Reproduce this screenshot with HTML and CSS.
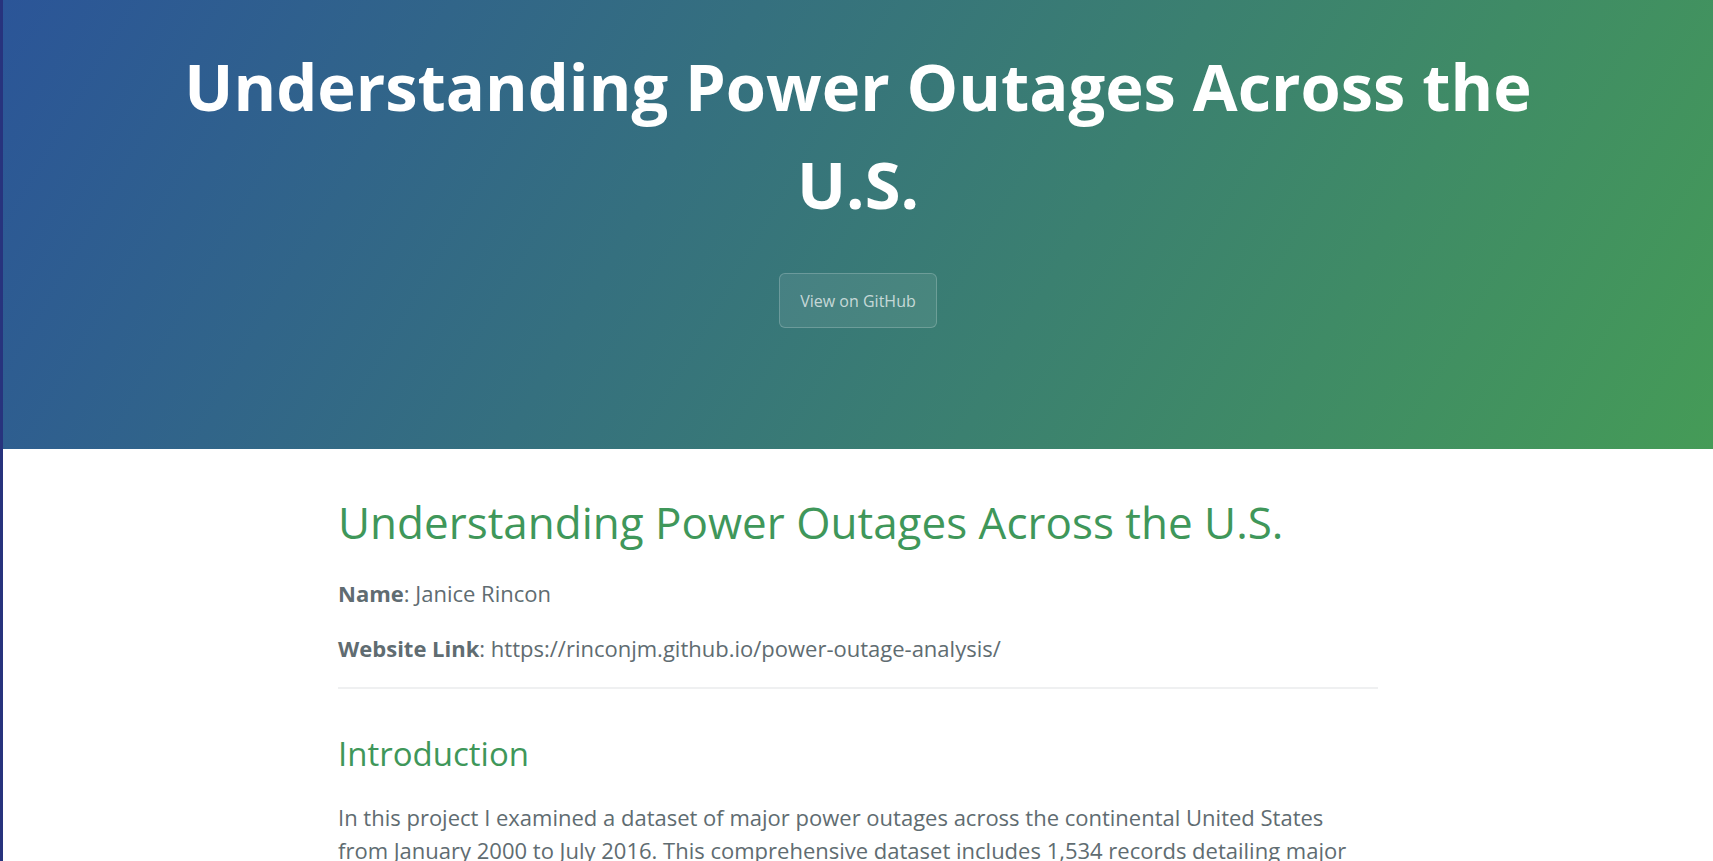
FILE: index.html
```html
<!DOCTYPE html>
<html lang="en">
<head>
<meta charset="utf-8">
<title>Understanding Power Outages Across the U.S.</title>
<link rel="stylesheet" href="styles.css">
</head>
<body>
<header class="page-header">
  <h1 class="project-name">Understanding Power Outages Across the U.S.</h1>
  <a class="btn" href="#">View on GitHub</a>
</header>
<main class="main-content">
  <h1 class="title">Understanding Power Outages Across the U.S.</h1>
  <p><strong>Name</strong>: Janice Rincon</p>
  <p><strong>Website Link</strong>: https://rinconjm.github.io/power-outage-analysis/</p>
  <hr class="rule">
  <h2 class="section-title">Introduction</h2>
  <p>In this project I examined a dataset of major power outages across the continental United States from January 2000 to July 2016. This comprehensive dataset includes 1,534 records detailing major power outage events, including information on their geographic location, climatic conditions, causes, and the number of customers affected.</p>
</main>
</body>
</html>
```

FILE: styles.css
```css
* {
  box-sizing: border-box;
}

html, body {
  margin: 0;
  padding: 0;
}

body {
  font-family: "Open Sans", "Liberation Sans", sans-serif;
  font-size: 20px;
  line-height: 1.5;
  color: #606c71;
  background: #ffffff;
  border-left: 3px solid #27337d;
  min-height: 100vh;
}

.page-header {
  color: #ffffff;
  text-align: center;
  background-color: #3f8a6a;
  background-image: linear-gradient(120deg, #2b5598, #459b57);
  padding: 38px 130px 101px;
}

.project-name {
  font-size: 65px;
  font-weight: 700;
  line-height: 1.5;
  margin: 0 0 40px;
}

.btn {
  display: inline-block;
  font-size: 16px;
  line-height: 1.5;
  padding: 14.5px 20px;
  margin-bottom: 20px;
  color: rgba(255, 255, 255, 0.7);
  background-color: rgba(255, 255, 255, 0.08);
  border: 1px solid rgba(255, 255, 255, 0.2);
  border-radius: 6px;
  text-decoration: none;
}

.main-content {
  max-width: 1280px;
  margin: 0 auto;
  padding: 40px 120px;
  font-size: 22px;
  line-height: 1.5;
  word-wrap: break-word;
}

.main-content p {
  margin: 22px 0;
}

.main-content strong {
  font-weight: 700;
}

.title {
  font-size: 44px;
  font-weight: 400;
  line-height: 1.5;
  color: #3f975a;
  margin: 0 0 20px;
}

.section-title {
  font-size: 33px;
  font-weight: 400;
  line-height: 1.5;
  color: #3f975a;
  margin: 40px 0 20px;
}

.rule {
  height: 2px;
  padding: 0;
  margin: 20px 0;
  background-color: #eff0f1;
  border: 0;
}
```
